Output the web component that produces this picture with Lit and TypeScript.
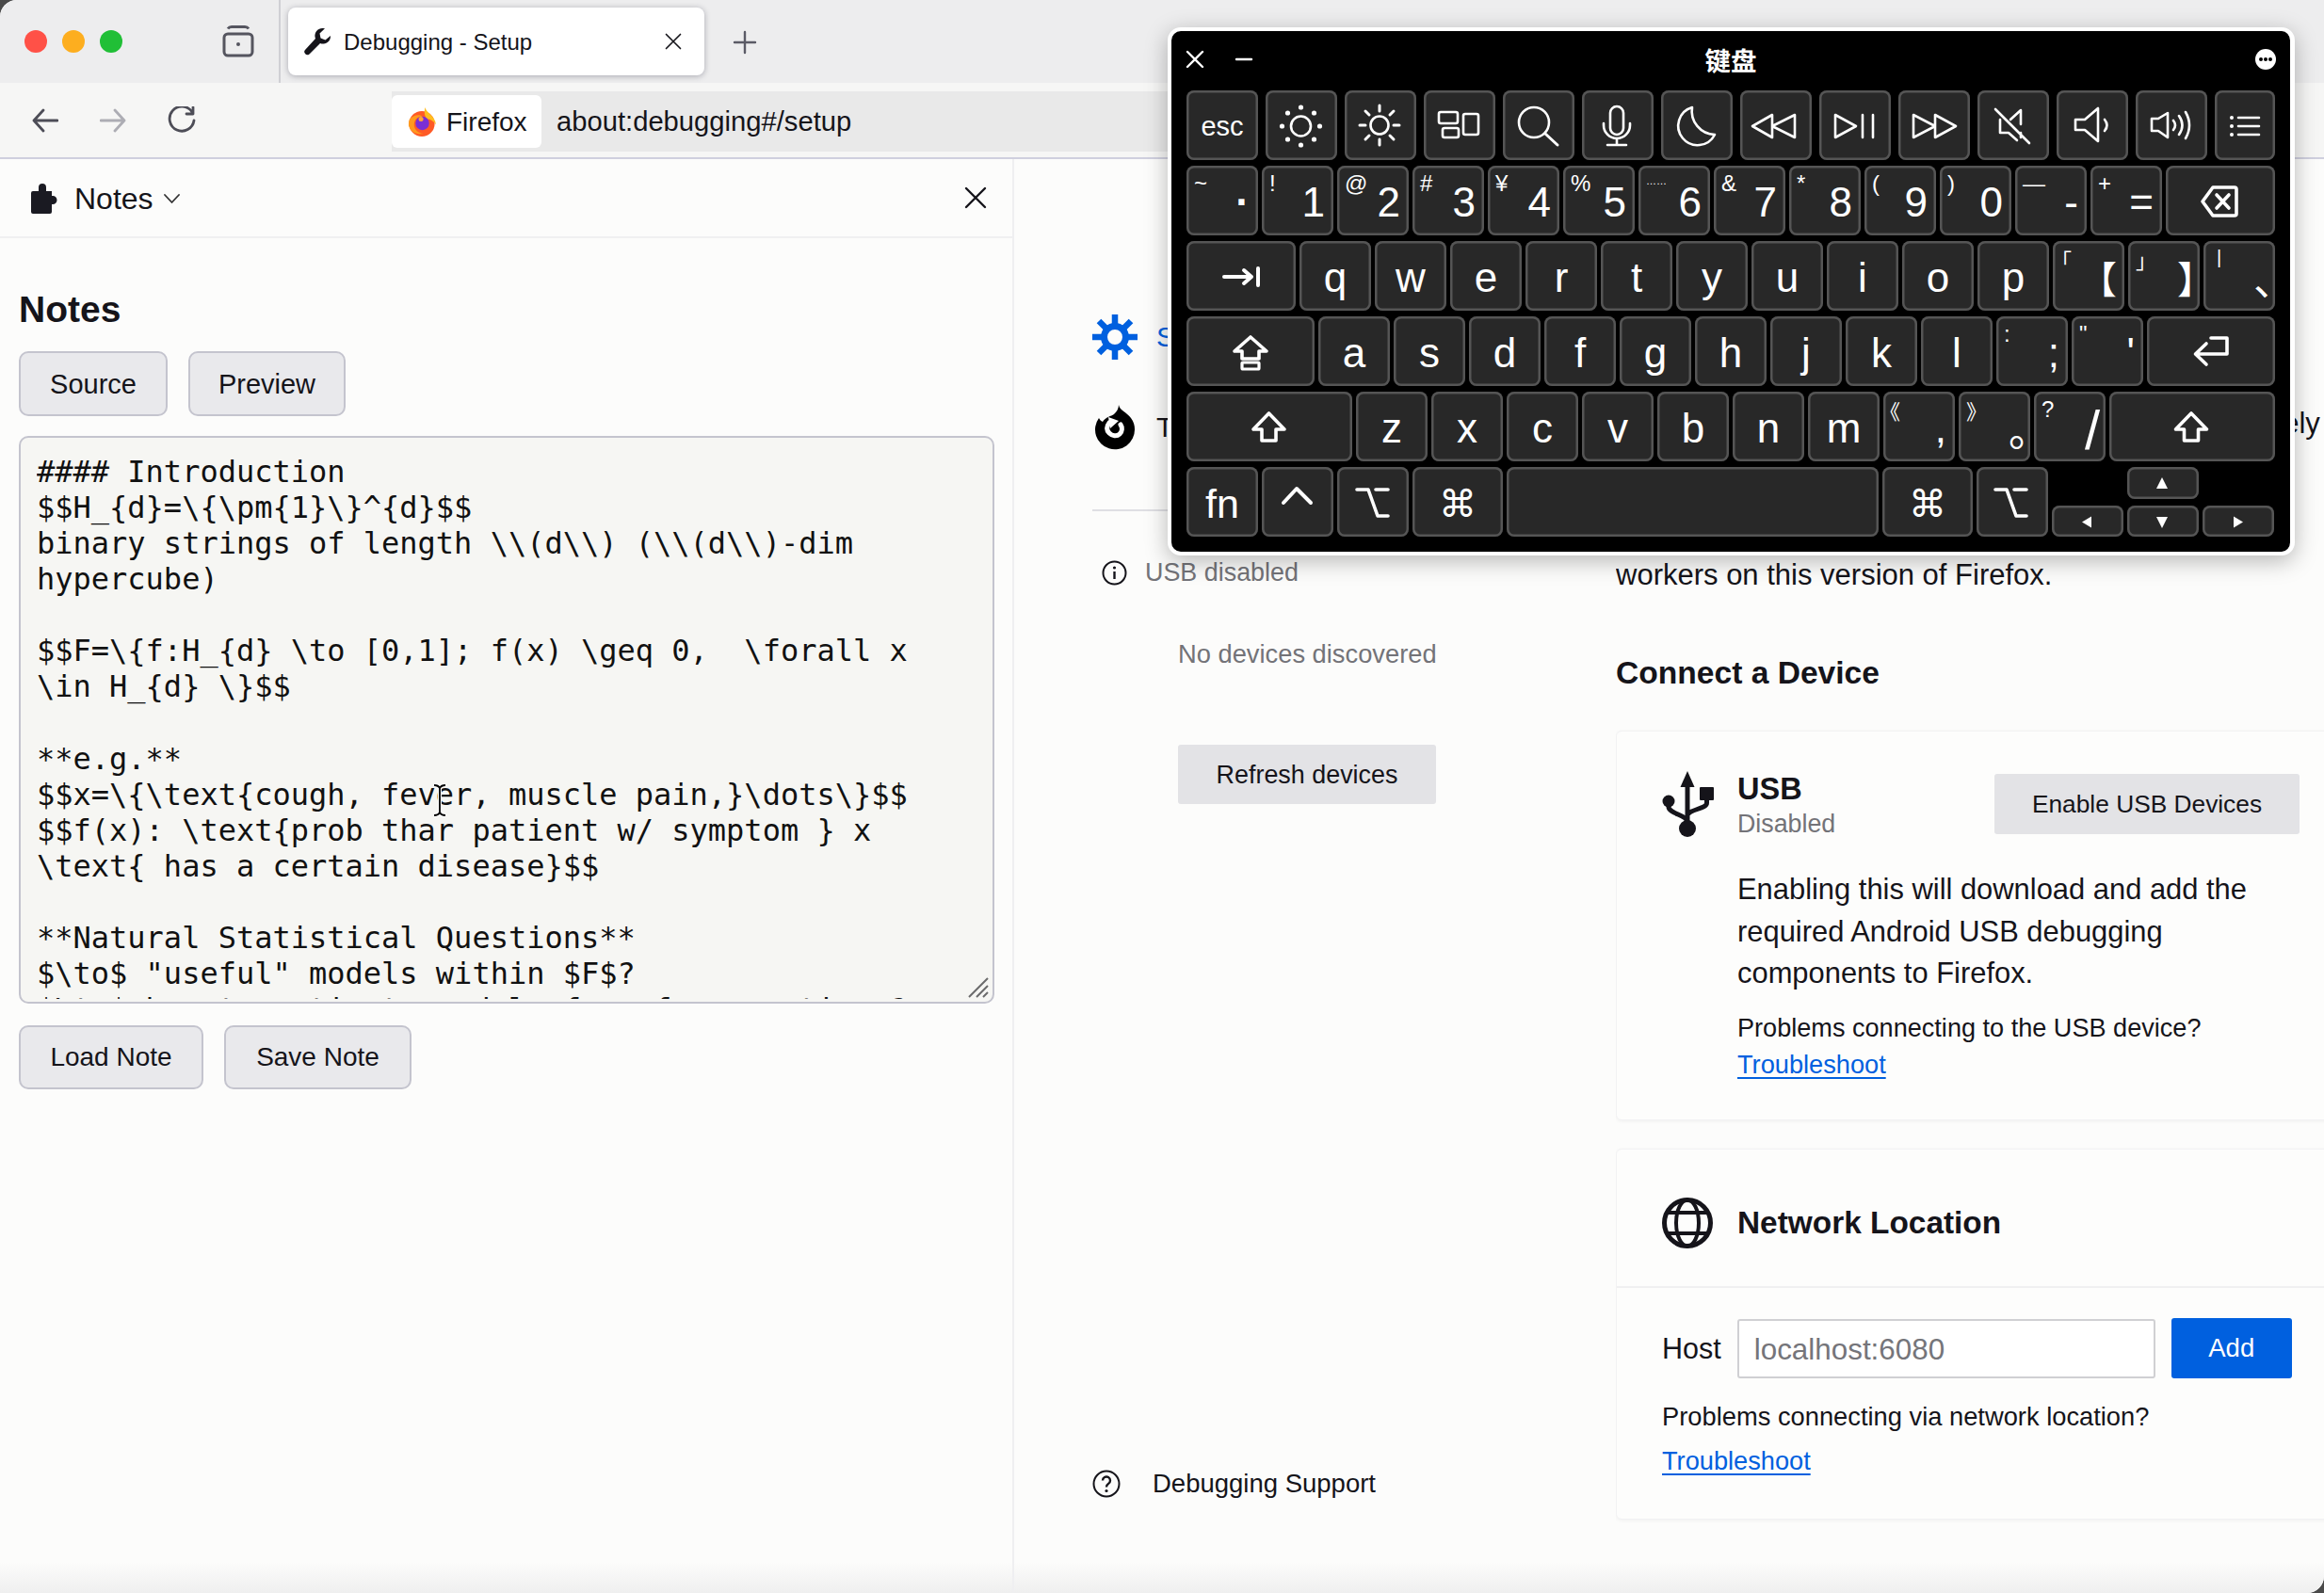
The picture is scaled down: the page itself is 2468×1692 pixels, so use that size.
import { LitElement, html, css, svg } from "lit";
import { customElement } from "lit/decorators.js";

const NOTE = String.raw`#### Introduction
$$H_{d}=\{\pm{1}\}^{d}$$
binary strings of length \\(d\\) (\\(d\\)-dim hypercube)

$$F=\{f:H_{d} \to [0,1]; f(x) \geq 0,  \forall x \in H_{d} \}$$

**e.g.**
$$x=\{\text{cough, fever, muscle pain,}\dots\}$$
$$f(x): \text{prob thar patient w/ symptom } x \text{ has a certain disease}$$

**Natural Statistical Questions**
$\to$ "useful" models within $F$?
$\to$ how to estimate models from few questions?`;

type K = { w?: number; m?: string; s?: string; c?: string; sc?: string; i?: any };

const ico = (x: number, y: number, w: number, h: number, body: any) =>
  html`<svg class="kicon" viewBox="${x} ${y} ${w} ${h}" fill="none" stroke="#fff" stroke-width="2.6" stroke-linecap="round" stroke-linejoin="round">${body}</svg>`;

const row1: K[] = [
  { m: "esc", c: "esc" },
  { i: ico(1344, 96, 76, 74, svg`<circle cx="1381.5" cy="134" r="10.5"/><g fill="#fff" stroke="none"><circle cx="1381.5" cy="114" r="2.6"/><circle cx="1401.5" cy="134" r="2.6"/><circle cx="1381.5" cy="154" r="2.6"/><circle cx="1361.5" cy="134" r="2.6"/><circle cx="1395.5" cy="120" r="2.6"/><circle cx="1395.5" cy="148" r="2.6"/><circle cx="1367.5" cy="148" r="2.6"/><circle cx="1367.5" cy="120" r="2.6"/></g>`) },
  { i: ico(1428, 96, 76, 74, svg`<circle cx="1465" cy="133" r="9.5"/><path stroke-width="3" d="M1465 112v6M1465 148v6M1444 133h6M1480 133h6M1450 118l4 4M1476 144l4 4M1480 118l-4 4M1454 144l-4 4"/>`) },
  { i: ico(1512, 96, 76, 74, svg`<rect x="1528" y="119" width="20" height="12" rx="2"/><rect x="1532" y="136" width="17" height="10" rx="2"/><rect x="1554" y="121" width="16" height="22" rx="2"/>`) },
  { i: ico(1596, 96, 76, 74, svg`<circle cx="1629" cy="130" r="16"/><path stroke-width="3" d="M1641 142l13 12"/>`) },
  { i: ico(1680, 96, 76, 74, svg`<rect x="1710" y="113" width="14" height="30" rx="7"/><path d="M1703 131v2a14 14 0 0 0 28 0v-2M1717 147v7M1707 154h20"/>`) },
  { i: ico(1764, 96, 76, 74, svg`<path d="M1797 114a20.5 20.5 0 1 0 24 29a25 25 0 0 1-24-29z"/>`) },
  { i: ico(1848, 96, 76, 74, svg`<path d="M1882 122l-21 12 21 12zM1906 122l-24 12 24 12z"/>`) },
  { i: ico(1932, 96, 76, 74, svg`<path d="M1949 122l22 12-22 12zM1978 122v24M1989 122v24"/>`) },
  { i: ico(2016, 96, 76, 74, svg`<path d="M2032 122l23 12-23 12zM2055 122l22 12-22 12z"/>`) },
  { i: ico(2100, 96, 76, 74, svg`<path d="M2146 132v-15l-11 10M2124 127v14h9l9 8M2146 141v5M2119 116l36 36"/>`) },
  { i: ico(2184, 96, 76, 74, svg`<path d="M2204 127h10l14-12v35l-14-12h-10zM2235 127q5 6 0 12"/>`) },
  { i: ico(2268, 96, 76, 74, svg`<path d="M2285 126h7l10-6v26l-10-7h-7zM2308 128q4 5 0 10M2314 123q7 10 0 20M2321 119q8 14 0 28"/>`) },
  { w: 64, i: ico(2352, 96, 64, 74, svg`<path d="M2377 125h22M2377 134h22M2377 143h22"/><g fill="#fff" stroke="none"><circle cx="2370" cy="125" r="2"/><circle cx="2370" cy="134" r="2"/><circle cx="2370" cy="143" r="2"/></g>`) },
];

const row2: K[] = [
  { s: "~", m: "·", c: "dot" },
  { s: "!", m: "1" }, { s: "@", m: "2" }, { s: "#", m: "3" }, { s: "¥", m: "4" }, { s: "%", m: "5" },
  { s: "……", m: "6", sc: "ell" }, { s: "&", m: "7" }, { s: "*", m: "8" }, { s: "(", m: "9" }, { s: ")", m: "0" },
  { s: "—", m: "-" }, { s: "+", m: "=" },
  { w: 116, i: ico(2300, 176, 116, 74, svg`<path stroke-width="3.6" d="M2350 199h23a2 2 0 0 1 2 2v26a2 2 0 0 1-2 2h-23l-11-15zM2354 207l13 14M2367 207l-13 14"/>`) },
];

const row3: K[] = [
  { w: 116, i: ico(1260, 256, 116, 74, svg`<path stroke-width="4" d="M1300 294h29M1321 287l8 7-8 7M1336 285v18"/>`) },
  ..."qwertyuiop".split("").map((m) => ({ m })),
  { s: "「", m: "【", c: "cjk lb", sc: "cjks lbs" },
  { s: "」", m: "】", c: "cjk rb", sc: "cjks" },
  { s: "|", m: "、", c: "cjk pause", sc: "pipe" },
];

const row4: K[] = [
  { w: 136, i: ico(1260, 336, 136, 74, svg`<path stroke-width="3.6" d="M1328 358l-17 15h8v8h18v-8h8z"/><rect stroke-width="3.2" x="1319" y="385" width="18" height="7" rx="1"/>`) },
  ..."asdfghjkl".split("").map((m) => ({ m })),
  { s: ":", m: ";" },
  { s: '"', m: "'" },
  { w: 136, i: ico(2280, 336, 136, 74, svg`<path stroke-width="3.6" d="M2348 359h17v17h-33M2343 365l-11.500 11 11.500 11"/>`) },
];

const row5: K[] = [
  { w: 176, i: ico(1260, 416, 176, 74, svg`<path stroke-width="3.6" d="M1347.500 439l-16.500 17h9v12h15v-12h9z"/>`) },
  ..."zxcvbnm".split("").map((m) => ({ m })),
  { s: "《", m: ",", sc: "cjks ll" },
  { s: "》", m: "。", c: "cjk period", sc: "cjks" },
  { s: "?", m: "/", c: "slash" },
  { w: 176, i: ico(2240, 416, 176, 74, svg`<path stroke-width="3.6" d="M2327 439l-16.500 17h9v12h15v-12h9z"/>`) },
];

const optPath = (x: number) => svg`<path stroke-width="3.6" d="M${x} 520h12l10 28h11M${x + 20} 520h13"/>`;

@customElement("app-root")
export class AppRoot extends LitElement {
  static styles = css`
    :host { display: block; width: 2468px; height: 1692px; background: #4a4a4a; font-family: "Liberation Sans", Arial, sans-serif; color: #15141a; }
    * { box-sizing: border-box; }
    .win { position: relative; width: 2468px; height: 1692px; overflow: hidden; display: flex; flex-direction: column; background: #fcfcfb; border-top-left-radius: 18px; border-bottom-right-radius: 18px; }
    .tabs { height: 88px; flex: none; background: #ededee; display: flex; align-items: center; }
    .lights { display: flex; gap: 16px; padding-left: 26px; width: 236px; }
    .lights i { width: 24px; height: 24px; border-radius: 50%; display: block; }
    .ffview { width: 34px; height: 34px; display: block; }
    .tabsep { width: 2px; height: 88px; margin-left: 26px; background: #cfcfd4; }
    .tab { margin-left: 8px; width: 442px; height: 72px; background: #fff; border-radius: 8px; box-shadow: 0 1px 6px rgba(40,40,60,.35); display: flex; align-items: center; padding-left: 16px; font-size: 24px; }
    .tab span { margin-left: 13px; flex: 1; padding-top: 2px; }
    .tab .x { margin-right: 24px; }
    .plus { margin-left: 30px; margin-top: 2px; }
    .toolbar { height: 81px; flex: none; background: #f6f6f5; border-bottom: 2px solid #cfcfde; display: flex; align-items: center; padding-left: 34px; }
    .navs { display: flex; gap: 44px; align-items: center; width: 382px; }
    .urlbar { width: 1890px; height: 64px; background: #e9e9e9; display: flex; align-items: center; margin-top: 2px; }
    .chip { width: 159px; height: 56px; background: #fff; border-radius: 6px; display: flex; align-items: center; padding: 2px 0 0 17px; gap: 10px; font-size: 28px; }
    .url { margin-left: 16px; font-size: 29.200px; padding-top: 2px; }
    .body { flex: 1; min-height: 0; display: flex; background: linear-gradient(#fcfcfb 0, #fcfcfb 1490px, #efefef 100%); }
    .side { width: 1077px; flex: none; border-right: 2px solid #efeff1; display: flex; flex-direction: column; }
    .shead { height: 84px; flex: none; border-bottom: 2px solid #f0f0f1; display: flex; align-items: center; padding-left: 33px; padding-top: 2px; font-size: 32px; }
    .shead .ttl { margin-left: 18px; }
    .shead .chev { margin-left: 11px; }
    .shead .close { margin-left: auto; margin-right: 27px; }
    .scontent { padding: 0 20px; }
    h1 { font-size: 39px; font-weight: 700; margin: 0; height: 46px; line-height: 46px; margin-top: 53px; }
    .btns { display: flex; gap: 22px; margin-top: 21px; }
    .btn { font: 29px "Liberation Sans", Arial, sans-serif; color: #15141a; background: #e9e9ec; border: 2px solid #c4c4ce; border-radius: 10px; height: 69px; padding: 2px 0 0; }
    .b1 { width: 158px; } .b2 { width: 167px; }
    .ta { position: relative; margin-top: 21px; width: 1036px; height: 603px; border: 2px solid #c4c4ce; border-radius: 10px; background: #f6f6f3; padding: 17px 0 3px 17px; overflow: hidden; }
    .tatext { height: 100%; width: 992px; overflow: hidden; font: 32px/38.070px "DejaVu Sans Mono", monospace; white-space: pre-wrap; color: #111; letter-spacing: 0; }
    .grip { position: absolute; right: 3px; bottom: 3px; width: 24px; height: 24px; }
    .b3 { width: 196px; height: 68px; font-size: 28px; padding: 0; } .b4 { width: 199px; height: 68px; font-size: 28px; padding: 0; }
    .lower { display: flex; gap: 22px; margin-top: 23px; }
    .nav { width: 639px; flex: none; padding: 165px 0 92px 83px; display: flex; flex-direction: column; font-size: 26.900px; }
    .nrow { height: 48px; display: flex; align-items: center; gap: 20px; font-size: 30px; white-space: nowrap; }
    .setup { color: #0060df; }
    .r2 { margin-top: 48px; }
    .hr { height: 2px; width: 400px; background: #dfdfe3; margin-top: 63px; }
    .usb { margin-top: 50px; height: 30px; display: flex; align-items: center; color: #737378; padding-left: 10px; gap: 19px; }
    .nodev { margin-top: 57px; height: 30px; line-height: 30px; width: 274px; margin-left: 91px; text-align: center; font-size: 27.300px; color: #737378; white-space: nowrap; }
    .flat { font: 26.900px "Liberation Sans", Arial, sans-serif; color: #15141a; background: #e3e3e6; border: 0; border-radius: 3px; height: 63px; padding: 0; }
    .refresh { margin-top: 81px; width: 274px; margin-left: 91px; padding-top: 1px; }
    .support { margin-top: auto; height: 48px; display: flex; align-items: center; font-size: 27.500px; gap: 34px; }
    .main { flex: 1; min-width: 0; padding-top: 258px; font-size: 31px; line-height: 45px; white-space: nowrap; overflow: hidden; }
    .main p { margin: 0; }
    .main p + p { margin-top: 26px; }
    h2 { font-size: 33.600px; font-weight: 700; margin: 62px 0 0; height: 40px; line-height: 40px; }
    .card { width: 780px; border: 1px solid #f2f2f3; border-radius: 6px; box-shadow: 0 1px 4px rgba(0,0,0,.05); background: #fdfdfc; }
    .c1 { margin-top: 41px; height: 414px; padding: 42px 0 0 48px; }
    .c2 { margin-top: 30px; height: 394px; }
    .chead { display: flex; align-items: flex-start; }
    .ctext { margin-left: 25px; width: 273px; }
    .ctext b { display: block; font-size: 32.500px; line-height: 38px; }
    .ctext span { display: block; font-size: 26.800px; line-height: 38px; color: #737378; margin-top: -1px; }
    .enable { width: 324px; height: 64px; margin-top: 3px; font-size: 26.300px; }
    .cbody { margin: 29px 0 0 80px; line-height: 44.700px; font-size: 30.900px; }
    .small { margin: 15px 0 0 80px; font-size: 27.100px; line-height: 39px; }
    a { color: #0060df; text-decoration: underline; text-decoration-thickness: 2px; text-underline-offset: 4px; display: inline-block; font-size: 27.200px; }
    .nhead { height: 147px; border-bottom: 2px solid #f0f0f1; display: flex; align-items: center; padding: 10px 0 0 48px; gap: 26px; font-size: 33.400px; font-weight: 700; }
    .nbody { padding: 32px 0 0 48px; }
    .hostrow { display: flex; align-items: center; font-size: 30.500px; line-height: 44px; }
    .hostrow input { margin-left: 17px; width: 444px; height: 63px; border: 2px solid #d0d0d3; border-radius: 3px; background: #fff; padding: 3px 16px 0; font: 31.400px "Liberation Sans", Arial, sans-serif; outline: none; }
    .hostrow input::placeholder { color: #75757a; opacity: 1; }
    .add { margin-left: 17px; width: 128px; height: 64px; background: #0060df; color: #fff; border: 0; border-radius: 3px; font: 27.500px "Liberation Sans", Arial, sans-serif; }
    .via { margin-top: 21px; font-size: 27.300px; line-height: 40px; }
    .nbody a { margin-top: 8px; line-height: 38px; }
    .kb { position: absolute; left: 1240px; top: 29px; width: 1197px; height: 561px; background: #000; border: solid #fff; border-width: 4px 5px 4px 4px; border-radius: 14px; box-shadow: 0 6px 24px rgba(0,0,0,.28); padding: 0 16px; color: #fff; }
    .ktitle { height: 63px; padding-bottom: 3px; display: grid; grid-template-columns: 1fr auto 1fr; align-items: center; }
    .kl { display: flex; gap: 32px; padding-left: 0; margin-left: -1px; }
    .kt { font: 700 27.500px "Noto Sans CJK SC", sans-serif; }
    .more { justify-self: end; width: 22px; height: 22px; margin-right: -1px; }
    .rows { display: flex; flex-direction: column; gap: 6px; }
    .row { display: flex; gap: 4px; height: 74px; }
    .row.top { gap: 8px; }
    .key { flex: none; width: 76px; height: 74px; border-radius: 8px; background: #282828; box-shadow: inset 0 0 0 2.500px #555; display: flex; align-items: center; justify-content: center; padding-top: 4px; font-size: 44px; line-height: 1; }
    .key.ic { padding: 0; }
    .kicon { width: 100%; height: 100%; display: block; }
    .key.two { justify-content: space-between; padding: 4px 9px 0 8px; }
    .key .sup { align-self: flex-start; font-size: 24px; line-height: 24px; margin-top: 3px; }
    .key .sup.ell { font-size: 11px; margin-top: 0; }
    .key .sup.cjks { font-family: "Noto Sans CJK SC", sans-serif; font-size: 22px; line-height: 24px; }
    .key .sup.lbs { margin-left: -10px; }
    .key .sup.ll { margin-left: -12px; }
    .key .sup.pipe { margin-left: 6px; font-size: 20px; margin-top: 1px; font-weight: 400; }
    .key .m.esc { font-size: 29px; margin-bottom: 2px; font-weight: 500; }
    .key .m.dot { font-weight: 700; }
    .key .m.slash { font-size: 58px; line-height: 58px; margin-right: -3px; margin-top: 4px; }
    .key .m.cjk { font-family: "Noto Sans CJK SC", sans-serif; flex: none; }
    .key .m.lb { font-size: 40px; margin-right: -1px; }
    .key .m.rb { font-size: 40px; margin-right: -25px; }
    .key .m.pause { margin-right: -30px; }
    .key .m.period { margin-right: -30px; margin-top: 0; }
    .key.fn { font-size: 43px; }
    .key.cmd { font: 40px "DejaVu Sans", sans-serif; }
    .key.space { width: 395px; }
    .arrows { display: flex; flex-direction: column; gap: 7px; width: 236px; }
    .arow { display: flex; gap: 4px; height: 33.500px; justify-content: center; }
    .key.ak { height: 33.500px; padding: 0; }
    .cursor { position: absolute; left: 458px; top: 832px; width: 18px; height: 36px; }
  `;

  private renderKey(k: K) {
    const style = k.w ? `width:${k.w}px` : "";
    if (k.i) return html`<div class="key ic" style=${style}>${k.i}</div>`;
    if (k.s) return html`<div class="key two" style=${style}><span class="sup ${k.sc ?? ""}">${k.s}</span><span class="m ${k.c ?? ""}">${k.m}</span></div>`;
    return html`<div class="key" style=${style}><span class="m ${k.c ?? ""}">${k.m}</span></div>`;
  }

  private x(size: number, color = "#15141a", sw = 2.4) {
    return html`<svg class="x" width=${size} height=${size} viewBox="0 0 24 24" fill="none" stroke=${color} stroke-width=${sw} stroke-linecap="round"><path d="M2 2l20 20M22 2L2 22"/></svg>`;
  }

  private keyboard() {
    return html`<div class="kb">
      <div class="ktitle">
        <div class="kl">
          <svg width="20" height="20" viewBox="0 0 20 20" fill="none" stroke="#fff" stroke-width="2.400" stroke-linecap="round"><path d="M2 2l16 16M18 2L2 18"/></svg>
          <svg width="20" height="20" viewBox="0 0 20 20" fill="none" stroke="#fff" stroke-width="2.400" stroke-linecap="round"><path d="M2 10h16"/></svg>
        </div>
        <div class="kt">键盘</div>
        <svg class="more" viewBox="0 0 22 22"><circle cx="11" cy="11" r="11" fill="#fff"/><circle cx="6" cy="11" r="2" fill="#000"/><circle cx="11" cy="11" r="2" fill="#000"/><circle cx="16" cy="11" r="2" fill="#000"/></svg>
      </div>
      <div class="rows">
        <div class="row top">${row1.map((k) => this.renderKey(k))}</div>
        <div class="row">${row2.map((k) => this.renderKey(k))}</div>
        <div class="row">${row3.map((k) => this.renderKey(k))}</div>
        <div class="row">${row4.map((k) => this.renderKey(k))}</div>
        <div class="row">${row5.map((k) => this.renderKey(k))}</div>
        <div class="row">
          <div class="key fn"><span class="m">fn</span></div>
          ${this.renderKey({ i: ico(1340, 496, 76, 74, svg`<path stroke-width="4" d="M1363 534l14-15 15 15"/>`) })}
          ${this.renderKey({ i: ico(1420, 496, 76, 74, optPath(1441)) })}
          <div class="key cmd" style="width:96px"><span class="m">⌘</span></div>
          <div class="key space"></div>
          <div class="key cmd" style="width:96px"><span class="m">⌘</span></div>
          ${this.renderKey({ i: ico(2100, 496, 76, 74, optPath(2120)) })}
          <div class="arrows">
            <div class="arow"><div class="key ic ak"><svg class="kicon" viewBox="2260 496 76 33.500"><path fill="#fff" d="M2297 507l6 12h-12z"/></svg></div></div>
            <div class="arow">
              <div class="key ic ak"><svg class="kicon" viewBox="2180 536 76 33.500"><path fill="#fff" d="M2212 553.500l10-6v12z"/></svg></div>
              <div class="key ic ak"><svg class="kicon" viewBox="2260 536 76 33.500"><path fill="#fff" d="M2291 548h12l-6 12z"/></svg></div>
              <div class="key ic ak"><svg class="kicon" viewBox="2340 536 76 33.500"><path fill="#fff" d="M2383 553.500l-10-6v12z"/></svg></div>
            </div>
          </div>
        </div>
      </div>
    </div>`;
  }

  render() {
    return html`<div class="win">
      <div class="tabs">
        <div class="lights"><i style="background:#ff5147"></i><i style="background:#fdae1f"></i><i style="background:#20bf36"></i></div>
        <svg class="ffview" viewBox="0 0 34 34" fill="none" stroke="#55555f" stroke-width="3"><path d="M6 3.500c1-1.500 2-2 4-2h14c2 0 3 .5 4 2"/><rect x="2" y="9" width="30" height="23" rx="4"/><circle cx="17" cy="20" r="2" fill="#55555f" stroke="none"/></svg>
        <div class="tabsep"></div>
        <div class="tab">
          <svg width="30" height="30" viewBox="0 0 30 30"><path fill="#15141a" d="M21 1a8 8 0 0 0-8 11L2 24a3.200 3.200 0 0 0 4.500 4.500L18 17a8 8 0 0 0 11-8l-5.500 4.500-5-2-1-5L23 1.300z"/></svg>
          <span>Debugging - Setup</span>
          ${this.x(18, "#15141a", 2.2)}
        </div>
        <svg class="plus" width="26" height="26" viewBox="0 0 26 26" stroke="#5b5b66" stroke-width="2.400" stroke-linecap="round"><path d="M13 2v22M2 13h22"/></svg>
      </div>
      <div class="toolbar">
        <div class="navs">
          <svg width="28" height="26" viewBox="0 0 28 26" fill="none" stroke="#4d4d57" stroke-width="2.800" stroke-linecap="round" stroke-linejoin="round"><path d="M27 13H2M12 2L2 13l10 11"/></svg>
          <svg width="28" height="26" viewBox="0 0 28 26" fill="none" stroke="#adadb4" stroke-width="2.800" stroke-linecap="round" stroke-linejoin="round"><path d="M1 13h25M16 2l10 11-10 11"/></svg>
          <svg width="30" height="30" viewBox="0 0 30 30" fill="none" stroke="#4d4d57" stroke-width="2.800" stroke-linecap="round" stroke-linejoin="round"><path d="M26 6a13 13 0 1 0 2 9M27 1v7h-7"/></svg>
        </div>
        <div class="urlbar">
          <div class="chip">
            <svg width="31" height="31" viewBox="0 0 32 32"><circle cx="15.500" cy="18" r="14" fill="#ff5a26"/><path fill="#ffbd1f" d="M19 0c1 6 11 9 12 19-3-4-6-6-10-6-3-4-3-9-2-13z"/><path fill="#ff9a1e" d="M2 13c4-4 10-6 14-3-5 0-9 3-9 9 0 6 5 9 10 10-7 1-14-2-16-9 0-3 0-5 1-7z"/><circle cx="16" cy="17.500" r="7.500" fill="#7a2fd4"/><circle cx="14.500" cy="13" r="2.600" fill="#ffa436"/></svg>
            Firefox
          </div>
          <div class="url">about:debugging#/setup</div>
        </div>
      </div>
      <div class="body">
        <div class="side">
          <div class="shead">
            <svg width="28" height="32" viewBox="0 0 28 32"><path fill="#1a1a22" d="M8 8V4a4 4 0 0 1 8 0v4h6v5h1a4.500 4.500 0 0 1 0 9h-1v8a2 2 0 0 1-2 2H2a2 2 0 0 1-2-2V10a2 2 0 0 1 2-2z"/></svg>
            <span class="ttl">Notes</span>
            <svg class="chev" width="17" height="10" viewBox="0 0 17 10" fill="none" stroke="#333" stroke-width="1.800" stroke-linecap="round" stroke-linejoin="round"><path d="M1 1l7.500 8L16 1"/></svg>
            <span class="close">${this.x(24)}</span>
          </div>
          <div class="scontent">
            <h1>Notes</h1>
            <div class="btns"><button class="btn b1">Source</button><button class="btn b2">Preview</button></div>
            <div class="ta">
              <div class="tatext">${NOTE}</div>
              <svg class="grip" viewBox="0 0 24 24" stroke="#6b6b6b" stroke-width="2"><path d="M2 22L22 2M10 22L22 10M17 22l5-5"/></svg>
            </div>
            <div class="lower"><button class="btn b3">Load Note</button><button class="btn b4">Save Note</button></div>
          </div>
        </div>
        <div class="nav">
          <div class="nrow setup">
            <svg width="48" height="48" viewBox="0 0 48 48" fill="none" stroke="#0060df" style="overflow:visible"><circle cx="24" cy="24" r="11.500" stroke-width="7"/><path stroke-width="6.500" d="M24 0v11M24 37v11M0 24h11M37 24h11M7 7l8 8M33 33l8 8M41 7l-8 8M15 33l-8 8"/></svg>
            Setup
          </div>
          <div class="nrow r2">
            <svg width="48" height="48" viewBox="0 0 48 48"><path fill="#000" d="M28 0c1 6 9 8 13 14 3 4 4 8 4 12a21 21 0 1 1-38-12c1 2 2 3 4 4 3-5 9-6 12-8 3-3 5-6 5-10z"/><path fill="none" stroke="#fff" stroke-width="5" stroke-linecap="round" d="M18 19c-3 4-3 8 0 11s8 4 11 1 3-7 1-10"/><path fill="#fff" d="M17 13l11 4-9 8z"/></svg>
            This Firefox
          </div>
          <div class="hr"></div>
          <div class="usb">
            <svg width="27" height="27" viewBox="0 0 27 27" fill="none" stroke="#15141a" stroke-width="2"><circle cx="13.500" cy="13.500" r="12"/><path stroke-width="2.400" d="M13.500 12v8"/><circle cx="13.500" cy="8" r="1.600" fill="#15141a" stroke="none"/></svg>
            USB disabled
          </div>
          <div class="nodev">No devices discovered</div>
          <button class="flat refresh">Refresh devices</button>
          <div class="support">
            <svg width="30" height="30" viewBox="0 0 30 30" fill="none" stroke="#15141a" stroke-width="2"><circle cx="15" cy="15" r="13.500"/><path stroke-width="2.400" d="M11 11.500a4 4 0 1 1 6 3.500c-1.500 1-2 1.500-2 3.500"/><circle cx="15" cy="22.500" r="1.600" fill="#15141a" stroke="none"/></svg>
            Debugging Support
          </div>
        </div>
        <div class="main">
          <p>Configure the connection method you wish to remotely<br />debug your device with.</p>
          <p>Use This Firefox to debug extensions and service<br />workers on this version of Firefox.</p>
          <h2>Connect a Device</h2>
          <div class="card c1">
            <div class="chead">
              <svg width="55" height="70" viewBox="0 0 55 70" fill="#15141a"><path d="M27 0l7.500 17h-15z"/><rect x="24.500" y="15" width="5" height="46"/><circle cx="27" cy="61" r="9"/><circle cx="7" cy="32" r="6.500"/><rect x="40" y="17" width="15" height="14" rx="1"/><path fill="none" stroke="#15141a" stroke-width="5" d="M7 34v4c0 7 20 9 20 16M47.500 30v4c0 6-20 7-20 13"/></svg>
              <div class="ctext"><b>USB</b><span>Disabled</span></div>
              <button class="flat enable">Enable USB Devices</button>
            </div>
            <div class="cbody">Enabling this will download and add the<br />required Android USB debugging<br />components to Firefox.</div>
            <div class="small">Problems connecting to the USB device?<br /><a href="#">Troubleshoot</a></div>
          </div>
          <div class="card c2">
            <div class="nhead">
              <svg width="54" height="54" viewBox="0 0 54 54" fill="none" stroke="#15141a" stroke-width="5"><circle cx="27" cy="27" r="24.500"/><ellipse cx="27" cy="27" rx="12" ry="24.500" stroke-width="4"/><path stroke-width="4" d="M4 16h46M4 38h46"/></svg>
              Network Location
            </div>
            <div class="nbody">
              <div class="hostrow">Host<input placeholder="localhost:6080" /><button class="add">Add</button></div>
              <div class="via">Problems connecting via network location?</div>
              <a href="#">Troubleshoot</a>
            </div>
          </div>
        </div>
      </div>
      ${this.keyboard()}
      <svg class="cursor" viewBox="0 0 18 36" fill="none"><path stroke="#fff" stroke-width="4" d="M3 2c3 0 5 1 6 3 1-2 3-3 6-3M9 5v26M3 34c3 0 5-1 6-3 1 2 3 3 6 3"/><path stroke="#000" stroke-width="1.800" d="M3 2c3 0 5 1 6 3 1-2 3-3 6-3M9 5v26M3 34c3 0 5-1 6-3 1 2 3 3 6 3"/></svg>
    </div>`;
  }
}
